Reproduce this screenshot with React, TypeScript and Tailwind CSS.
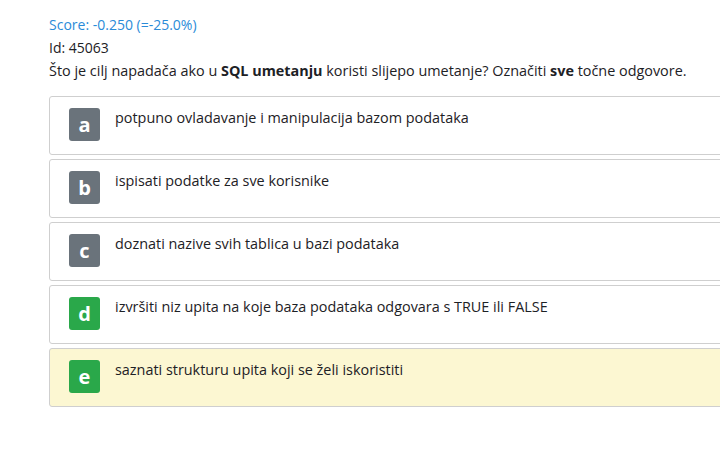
import React from "react";

const options = [
  { l: "a", t: "potpuno ovladavanje i manipulacija bazom podataka", green: false, sel: false },
  { l: "b", t: "ispisati podatke za sve korisnike", green: false, sel: false },
  { l: "c", t: "doznati nazive svih tablica u bazi podataka", green: false, sel: false },
  { l: "d", t: "izvršiti niz upita na koje baza podataka odgovara s TRUE ili FALSE", green: true, sel: false },
  { l: "e", t: "saznati strukturu upita koji se želi iskoristiti", green: true, sel: true },
];

export default function App() {
  return (
    <div
      className="w-[720px] h-[449px] overflow-hidden bg-white text-[#1d2125]"
      style={{ fontFamily: '"Open Sans", "Noto Sans", sans-serif' }}
    >
      <div className="pl-[49px] pt-[13px]">
        <div className="text-[14px] leading-[23px] text-[#2a8bd8]">Score: -0.250 (=-25.0%)</div>
        <div className="text-[14px] leading-[23px]">Id: 45063</div>
        <div className="text-[14.4px] leading-[24px]">
          Što je cilj napadača ako u <b>SQL umetanju</b> koristi slijepo umetanje? Označiti <b>sve</b> točne odgovore.
        </div>
        <div className="mt-[13px] flex flex-col gap-[4px]">
          {options.map((o) => (
            <div
              key={o.l}
              className={
                "w-[700px] h-[59px] flex items-start pl-[19px] pt-[11px] border border-[#cfcfcf] rounded-[3px] " +
                (o.sel ? "bg-[#fcf7d2]" : "bg-white")
              }
            >
              <div
                className={
                  "w-[31px] h-[33px] rounded-[3px] flex items-center justify-center text-white font-bold text-[20px] " +
                  (o.green ? "bg-[#2aa84a]" : "bg-[#6a737b]")
                }
              >
                {o.l}
              </div>
              <div className="ml-[15px] text-[14.4px] leading-[24px] -mt-[2px]">{o.t}</div>
            </div>
          ))}
        </div>
      </div>
    </div>
  );
}
